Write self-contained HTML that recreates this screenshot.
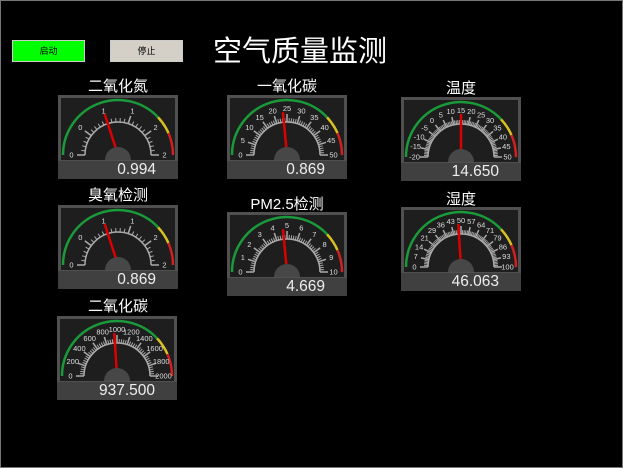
<!DOCTYPE html>
<html><head><meta charset="utf-8"><style>
body{margin:0;background:#000;width:623px;height:468px;overflow:hidden;position:relative;font-family:"Liberation Sans","Noto Sans CJK SC",sans-serif}
#bd{position:absolute;left:0;top:0;width:621px;height:466px;border:1px solid #777}
.btn{position:absolute;top:40px;height:20px;width:71px;border:1px solid #ccc;font-size:9px;text-align:center;line-height:20px;color:#000}
.t{position:absolute;color:#fff;font-size:15px;width:160px;text-align:center;line-height:16px}
.g{position:absolute;width:120px;height:84px}
.v{position:absolute;color:#eee;font-size:15.5px;left:0;width:98px;text-align:right;bottom:0px;line-height:19px}
</style></head><body>
<div id="bd"></div>
<div class="btn" style="left:12px;background:#00ff00">启动</div>
<div class="btn" style="left:110px;background:#d4d0c8">停止</div>
<div style="position:absolute;left:213px;top:35px;color:#fff;font-size:29px;line-height:34px">空气质量监测</div>

<div class="t" style="left:38px;top:79px">二氧化氮</div>
<div class="g" style="left:58px;top:95px" data-l="0,0,1,1,2,2" data-f="0.4"><div class="v">0.994</div></div>
<div class="t" style="left:207px;top:79px">一氧化碳</div>
<div class="g" style="left:227px;top:95px" data-l="0,5,10,15,20,25,30,35,40,45,50" data-f="0.47"><div class="v">0.869</div></div>
<div class="t" style="left:381px;top:81px">温度</div>
<div class="g" style="left:401px;top:97px" data-l="-20,-15,-10,-5,0,5,10,15,20,25,30,35,40,45,50" data-f="0.5"><div class="v">14.650</div></div>
<div class="t" style="left:38px;top:188px">臭氧检测</div>
<div class="g" style="left:58px;top:205px" data-l="0,0,1,1,2,2" data-f="0.4"><div class="v">0.869</div></div>
<div class="t" style="left:207px;top:197px">PM2.5检测</div>
<div class="g" style="left:227px;top:212px" data-l="0,1,2,3,4,5,6,7,8,9,10" data-f="0.47"><div class="v">4.669</div></div>
<div class="t" style="left:381px;top:192px">湿度</div>
<div class="g" style="left:401px;top:207px" data-l="0,7,14,21,29,36,43,50,57,64,71,79,86,93,100" data-f="0.48"><div class="v">46.063</div></div>
<div class="t" style="left:38px;top:299px">二氧化碳</div>
<div class="g" style="left:57px;top:316px" data-l="0,200,400,600,800,1000,1200,1400,1600,1800,2000" data-f="0.48"><div class="v">937.500</div></div>

<script>
document.querySelectorAll('.g').forEach(function(g){
var L=g.dataset.l.split(','),f=+g.dataset.f,cx=60,cy=60,n=L.length-1;
function P(a,r){var t=Math.PI*(1-a);return [(cx+r*Math.cos(t)).toFixed(2),(cy-r*Math.sin(t)).toFixed(2)];}
function arc(a0,a1,r,c){var p=P(a0,r),q=P(a1,r);return '<path d="M'+p+' A'+r+' '+r+' 0 0 1 '+q+'" fill="none" stroke="'+c+'" stroke-width="2.5"/>';}
var s='<svg width="120" height="84" style="position:absolute;left:0;top:0"><rect width="120" height="84" fill="#505050"/><rect x="3" y="3" width="114" height="62" fill="#1e1e1e"/><rect x="0" y="66" width="120" height="18" fill="#404040"/>';
s+=arc(0,0.76,55,'#1a9a3a')+arc(0.76,0.87,55,'#d8c020')+arc(0.87,1,55,'#d02020');
s+=arc(0,1,33,'#aaa').replace('stroke-width="2.5"','stroke-width="1.5"');
var m=n*5;for(var i=0;i<=m;i++){var a=i/m,big=i%5==0,p=P(a,33),q=P(a,big?41:37);s+='<line x1="'+p[0]+'" y1="'+p[1]+'" x2="'+q[0]+'" y2="'+q[1]+'" stroke="#aaa" stroke-width="'+(big?1.5:1)+'"/>';}
L.forEach(function(l,i){var p=P(i/n,46.5);s+='<text x="'+p[0]+'" y="'+(+p[1]+2.5)+'" font-size="7.5" fill="#ddd" text-anchor="middle" font-family="Liberation Sans">'+l+'</text>';});
var p=P(f,2),q=P(f,43);s+='<line x1="'+p[0]+'" y1="'+p[1]+'" x2="'+q[0]+'" y2="'+q[1]+'" stroke="#d00" stroke-width="2.5"/>';
s+='<path d="M47 65 A13 13 0 0 1 73 65 Z" fill="#474747"/></svg>';
g.insertAdjacentHTML('afterbegin',s);});
</script>
</body></html>
